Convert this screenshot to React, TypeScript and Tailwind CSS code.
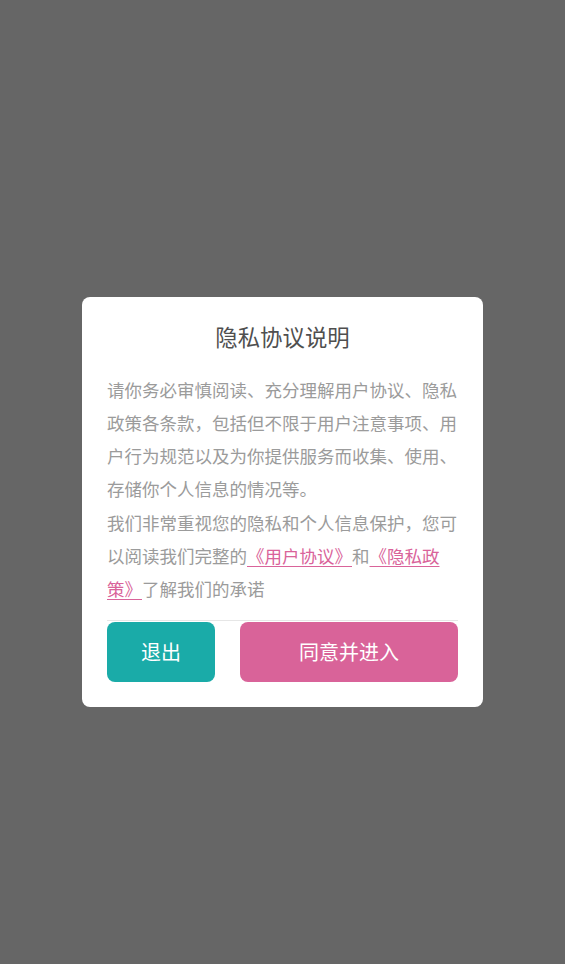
export default function App() {
  return (
    <div
      className="min-h-screen w-full bg-[#666666] pt-[297px] px-[82px]"
      style={{ fontFamily: '"Noto Sans CJK SC", "Noto Sans", sans-serif' }}
    >
      <div className="w-[401px] rounded-[8px] bg-white px-[25px] pt-[24px] pb-[25px]">
        {/* Title */}
        <h1 className="text-center text-[22.4px] leading-[30px] text-[#4f4f4f]">隐私协议说明</h1>

        {/* Body */}
        <div className="mt-[22px] text-[17.5px] leading-[33px] text-[#9b9b9b]">
          <p>
            请你务必审慎阅读、充分理解用户协议、隐私政策各条款，包括但不限于用户注意事项、用户行为规范以及为你提供服务而收集、使用、存储你个人信息的情况等。
          </p>
          <p className="mt-[1px]">
            我们非常重视您的隐私和个人信息保护，您可以阅读我们完整的
            <a className="text-[#d9639a] underline underline-offset-[3px]">《用户协议》</a>
            和
            <a className="text-[#d9639a] underline underline-offset-[3px]">《隐私政策》</a>
            了解我们的承诺
          </p>
        </div>

        {/* Actions */}
        <div className="mt-[15px] flex gap-[25px] border-t border-[#e6e6e6] pt-px">
          <button className="h-[60px] w-[108px] rounded-[8px] bg-[#1aaba8] text-[20px] text-white">
            退出
          </button>
          <button className="h-[60px] flex-1 rounded-[8px] bg-[#d96399] text-[20px] text-white">
            同意并进入
          </button>
        </div>
      </div>
    </div>
  )
}
